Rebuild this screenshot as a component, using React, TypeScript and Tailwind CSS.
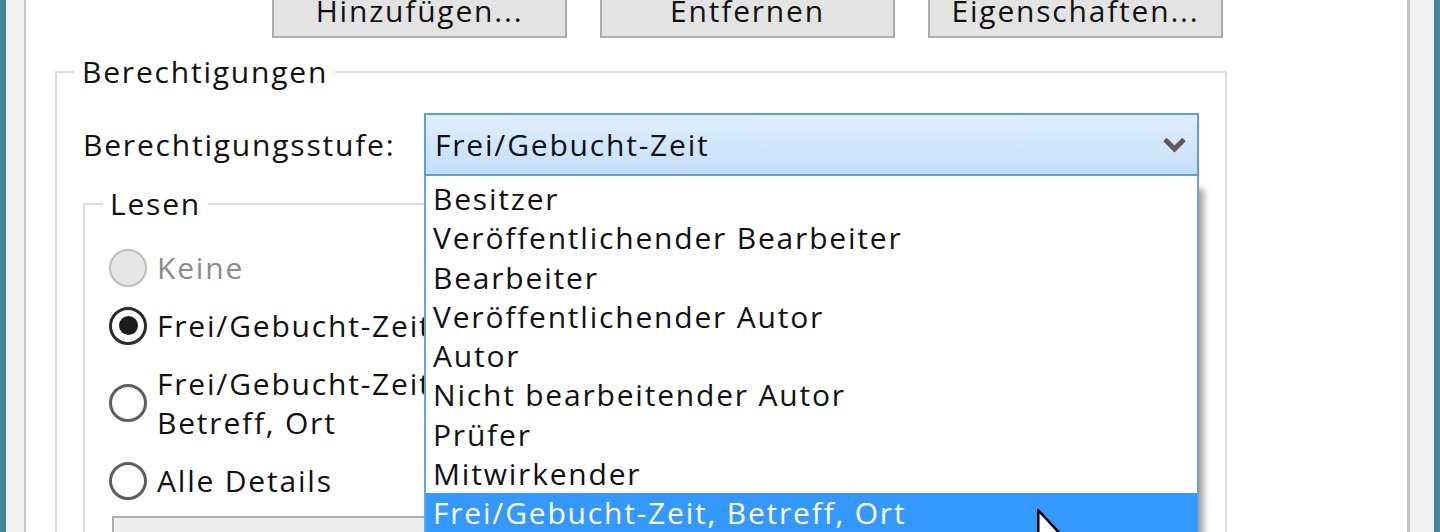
const LEVELS = [
  "Besitzer",
  "Veröffentlichender Bearbeiter",
  "Bearbeiter",
  "Veröffentlichender Autor",
  "Autor",
  "Nicht bearbeitender Autor",
  "Prüfer",
  "Mitwirkender",
  "Frei/Gebucht-Zeit, Betreff, Ort",
];

type RadioState = "disabled" | "checked" | "off";

const Radio = ({ state }: { state: RadioState }) => {
  if (state === "disabled") {
    return <span className="h-[38px] w-[38px] shrink-0 rounded-full border-2 border-[#bdbdbd] bg-[#e6e6e6]" />;
  }
  return (
    <span
      className={`flex h-[38px] w-[38px] shrink-0 items-center justify-center rounded-full border-[3px] bg-white ${
        state === "checked" ? "border-[#2b2b2b]" : "border-[#5e5e5e]"
      }`}
    >
      {state === "checked" && <span className="h-[19px] w-[19px] rounded-full bg-[#1c1c1c]" />}
    </span>
  );
};

const Chevron = () => (
  <svg width="23" height="18" viewBox="0 0 23 18" className="shrink-0">
    <path d="M2 3.5 L11.5 13 L21 3.5" fill="none" stroke="#5a5a5a" strokeWidth="5" />
  </svg>
);

const Cursor = () => (
  <svg width="30" height="50" viewBox="0 0 12 20" className="absolute left-[1037px] top-[509px] z-20">
    <path
      d="M0.5 0.5 L0.5 16 L4.2 12.6 L6.6 18.4 L8.6 17.5 L6.3 12 L11.2 12 Z"
      fill="#fff"
      stroke="#000"
      strokeWidth="1"
    />
  </svg>
);

const WinButton = ({ label }: { label: string }) => (
  <button className="flex h-[56px] w-[295px] items-center justify-center border-2 border-[#adadad] bg-[#e3e3e3] text-[#111]">
    {label}
  </button>
);

const PermissionLevel = () => (
  <div className="relative h-[63px] flex-1">
    <div className="flex h-full items-center justify-between border-2 border-[#5a9fe6] bg-gradient-to-b from-[#e1effd] to-[#c3defa] pl-[9px] pr-[11px]">
      <span>Frei/Gebucht-Zeit</span>
      <Chevron />
    </div>

    {/* opened list */}
    <ul className="absolute left-0 right-0 top-full z-10 border-x-2 border-[#62a4ea] bg-white pt-[3px] shadow-[8px_10px_6px_-3px_rgba(0,0,0,0.35)]">
      {LEVELS.map((level, index) => (
        <li
          key={index}
          className={`h-[39.3px] px-[7px] leading-[39px] ${
            index === LEVELS.length - 1 ? "bg-[#3399ff] text-white" : "text-[#111]"
          }`}
        >
          {level}
        </li>
      ))}
    </ul>
  </div>
);

const App = () => {
  return (
    <div className="relative flex h-[532px] w-[1440px] overflow-hidden bg-white font-['Open_Sans',sans-serif] text-[30px] tracking-[1.8px] text-[#111]">
      <div className="w-[6px] shrink-0 bg-[#44849a]" />
      <div className="w-[20px] shrink-0 border-r-2 border-[#c4c4c4] bg-[#f0f0f0]" />

      <main className="min-w-0 flex-1 pl-[29px] pr-[180px]">
        <div className="ml-[217px] mt-[-18px] flex gap-[33px]">
          <WinButton label="Hinzufügen..." />
          <WinButton label="Entfernen" />
          <WinButton label="Eigenschaften..." />
        </div>

        <fieldset className="mt-[14px] h-[600px] border-2 border-[#dcdcdc]">
          <legend className="ml-[18px] px-[7px] leading-[39px]">Berechtigungen</legend>

          <div className="px-[26px]">
            <div className="mt-[22px] flex items-center">
              <span className="w-[341px] shrink-0">Berechtigungsstufe:</span>
              <PermissionLevel />
            </div>

            <fieldset className="mt-[8px] h-[500px] w-[600px] border-2 border-[#dcdcdc]">
              <legend className="ml-[18px] px-[7px] leading-[39px]">Lesen</legend>

              <div className="flex flex-col gap-[19px] pl-[24px] pt-[25px] leading-[39px]">
                <label className="flex items-center gap-[10px] text-[#8b8b8b]">
                  <Radio state="disabled" />
                  Keine
                </label>
                <label className="flex items-center gap-[10px]">
                  <Radio state="checked" />
                  Frei/Gebucht-Zeit
                </label>
                <label className="flex items-center gap-[10px]">
                  <Radio state="off" />
                  <span>
                    Frei/Gebucht-Zeit,
                    <br />
                    Betreff, Ort
                  </span>
                </label>
                <label className="flex items-center gap-[10px]">
                  <Radio state="off" />
                  Alle Details
                </label>
              </div>

              <div className="ml-[27px] mt-[16px] h-[50px] border-2 border-[#adadad] bg-[#ededed]" />
            </fieldset>
          </div>
        </fieldset>
      </main>

      <div className="w-[27px] shrink-0 border-l-[3px] border-[#c2c2c2] bg-[#f0f0f0]" />
      <div className="w-[6px] shrink-0 bg-[#44849a]" />

      <Cursor />
    </div>
  );
};

export default App;
